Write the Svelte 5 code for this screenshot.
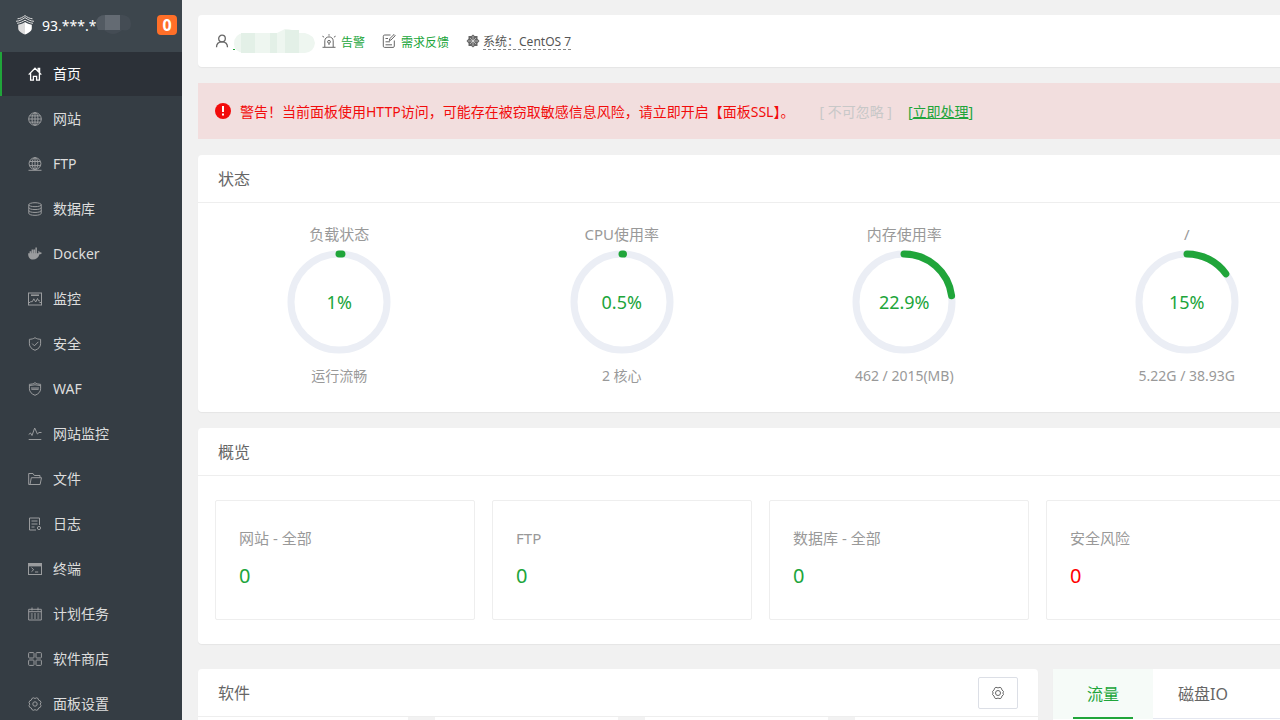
<script lang="ts">
  const menu = [
    { name: '首页', icon: 'home' },
    { name: '网站', icon: 'site' },
    { name: 'FTP', icon: 'ftp' },
    { name: '数据库', icon: 'database' },
    { name: 'Docker', icon: 'docker' },
    { name: '监控', icon: 'monitor' },
    { name: '安全', icon: 'shield' },
    { name: 'WAF', icon: 'waf' },
    { name: '网站监控', icon: 'pulse' },
    { name: '文件', icon: 'folder' },
    { name: '日志', icon: 'log' },
    { name: '终端', icon: 'terminal' },
    { name: '计划任务', icon: 'calendar' },
    { name: '软件商店', icon: 'apps' },
    { name: '面板设置', icon: 'gear' }
  ];

  const gauges = [
    { title: '负载状态', value: 1, info: '运行流畅' },
    { title: 'CPU使用率', value: 0.5, info: '2 核心' },
    { title: '内存使用率', value: 22.9, info: '462 / 2015(MB)' },
    { title: '/', value: 15, info: '5.22G / 38.93G' }
  ];

  const totals = [
    { title: '网站 - 全部', count: 0 },
    { title: 'FTP', count: 0 },
    { title: '数据库 - 全部', count: 0 },
    { title: '安全风险', count: 0, danger: true }
  ];

  let active = $state('home');
  let tab = $state('流量');
</script>

{#snippet icon(name: string)}
  <svg class="icon" viewBox="0 0 14 14" aria-hidden="true">
    {#if name === 'home'}
      <path d="M.7 7.6 7 1.2l6.3 6.4M2.6 6.3v6.9h2.8V9.4h3.2v3.8h2.8V6.3M10.2 4V1.4h1.4v4" stroke-width="1.3" />
    {:else if name === 'site'}
      <circle cx="7" cy="7" r="6.3" />
      <ellipse cx="7" cy="7" rx="3" ry="6.3" />
      <path d="M7 .7v12.6M.7 7h12.6M1.6 3.9h10.8M1.6 10.1h10.8" />
    {:else if name === 'ftp'}
      <circle cx="7" cy="6.6" r="5.9" />
      <ellipse cx="7" cy="6.6" rx="2.8" ry="5.9" />
      <path d="M7 .7v11.8M1.7 4.5h10.6M1.3 8.6h11.4M.5 13.3h13" />
    {:else if name === 'database'}
      <ellipse cx="7" cy="2.7" rx="6.2" ry="2" />
      <path d="M.8 2.7v8.6c0 2.7 12.4 2.7 12.4 0V2.7M.8 5.6c0 2.6 12.4 2.6 12.4 0M.8 8.5c0 2.6 12.4 2.6 12.4 0" />
    {:else if name === 'docker'}
      <path class="solid" d="M.2 6.2h10c.4-.8.3-1.7 0-2.4.8.1 1.4.9 1.5 1.6.8-.2 1.6 0 2.2.5-.4.9-1.3 1.4-2.4 1.4C10.3 11 8 12.6 5 12.6 1.7 12.6-.1 9.700.2 6.2ZM1.600 4.200h1.700v2.200H1.600ZM3.600 2.400h1.600v4H3.600ZM5.500 2.400h1.600v4H5.500ZM7.400.6h1.500v5.800H7.400Z" />
    {:else if name === 'monitor'}
      <rect x=".5" y="1" width="13" height="12" />
      <path d="M3 3.200h8" stroke-width="1.500" />
      <path d="M2.300 9.700h2l1.500-2.900L7.700 10l1.800-3.500 1 2.300h1.500M.7 10.500h1.500M11.500 10.500h1.800" />
    {:else if name === 'shield'}
      <path d="M7 .7c1.500 1.100 3.500 1.500 5.600 1.600v4.500c0 3-2.200 5.200-5.600 6.500-3.400-1.300-5.600-3.500-5.600-6.500V2.300C3.500 2.200 5.500 1.800 7 .7ZM4.200 6.600l2.200 2.200 4-4" />
    {:else if name === 'waf'}
      <path d="M7 .7c1.500 1.100 3.500 1.500 5.600 1.600v4.500c0 3-2.200 5.200-5.600 6.500-3.400-1.300-5.600-3.500-5.600-6.500V2.300C3.500 2.200 5.500 1.800 7 .7ZM1.400 3.500 7 2.800l5.600.7" />
      <path d="M3 6h8M3.400 7.300h7.200" />
    {:else if name === 'pulse'}
      <path d="M.7 7.500 2.500 6 4 8.500 6.700 1l2.700 6L11 5.500h2.500M.7 12.500h12.600" />
    {:else if name === 'folder'}
      <path d="M2 12.500H.7V1.500H5l1.300 2H12v2.200M2 12.500 3.300 5.700h10.200l-1.400 6.800Z" />
    {:else if name === 'log'}
      <path d="M8 13H1.500V1h10v7M3.500 4h6M3.500 7h6M3.500 10h3" />
      <circle cx="11" cy="11" r="1.600" />
    {:else if name === 'terminal'}
      <rect x=".5" y="1.500" width="13" height="11" />
      <path d="M.7 3.200h12.600" stroke-width="2.400" />
      <path d="m3.500 5.700 2.200 2-2.200 2M7 10h3.200" />
    {:else if name === 'calendar'}
      <path d="M.7 2.300h12.600V13H.7ZM.7 4.700h12.600M4 .5v3M10 .5v3M2.800 7h2M6 7h2M9.300 7h2M2.800 9h2M6 9h2M9.300 9h2M2.800 11h2M6 11h2M9.300 11h2" />
    {:else if name === 'apps'}
      <rect x=".6" y=".6" width="5.400" height="5.400" rx=".8" />
      <rect x="8" y=".6" width="5.400" height="5.400" rx=".8" />
      <rect x=".6" y="8" width="5.400" height="5.400" rx=".8" />
      <rect x="8" y="8" width="5.400" height="5.400" rx=".8" />
    {:else if name === 'gear'}
      <path d="m5.500.8 1.500.7 1.500-.7 1.600.7.5 1.600 1.700.8.7 1.700-.8 1.500.8 1.500-.7 1.700-1.700.7-.6 1.600-1.600.7-1.400-.7-1.500.7-1.600-.7-.6-1.600L1.700 10.300 1 8.600l.8-1.500L1 5.600l.7-1.700 1.600-.8.6-1.600Z" />
      <circle cx="7" cy="7" r="2.200" />
    {:else if name === 'gear-hex'}
      <path d="m5 1.300 2 .6 2-.6 1.500 1 .4 1.600 1.600 1.500-.6 1.600.6 1.600-1.600 1.500-.4 1.600-1.500 1-2-.6-2 .6-1.500-1-.4-1.600L1.500 8.600 2.100 7l-.6-1.600 1.600-1.500.4-1.600Z" />
      <circle cx="7" cy="7" r="2.500" />
    {:else if name === 'user'}
      <circle cx="7" cy="4.500" r="3.300" stroke-width="1.300" />
      <path d="M1.500 13.300c0-3.200 2.200-5.400 5.500-5.400s5.500 2.200 5.500 5.400" stroke-width="1.300" />
    {:else if name === 'alarm'}
      <path d="M2.800 13V6.800c0-5.200 8.400-5.200 8.400 0V13M.5 13.300h13M7 .2v1.500M.4 2.200l1.700 1M13.600 2.200l-1.700 1M7 9.200V11" />
      <circle cx="7" cy="7.800" r="1.400" />
    {:else if name === 'feedback'}
      <path d="M8.500 1H2.700C1.800 1 1.300 1.500 1.300 2.300v9.900c0 .8.500 1.200 1.300 1.200h8.500c.8 0 1.200-.5 1.200-1.200V6.500M3.500 4.500H6M3.500 7.800H8M3.500 10.800h6.500M7.300 6.500l.4-1.800L12 .5l1.200 1.200L9 6Z" />
    {:else if name === 'system'}
      <path class="solid" d="M7 .5 8.700 2h2.800v2.700L13.500 7l-2 2.300V12H8.700L7 13.500 5.300 12H2.500V9.300L.5 7l2-2.300V2h2.800Z" />
      <path class="cut" d="M7 2v10M2 7h10M4 4l6 6M10 4l-6 6" />
    {/if}
  </svg>
{/snippet}

<div class="panel">
  <aside>
    <div class="server">
      <svg class="logo" viewBox="0 0 18 20" aria-hidden="true">
        <path d="M0 6.300c4-.3 6-1.800 9-3.700 3 1.900 5 3.400 9 3.700M1.500 3.800C4.500 3.600 7 2 9 .6c2 1.400 4.500 3 7.500 3.200M1 8.300c3-.3 6-1.700 8-3.100 2 1.400 5 2.800 8 3.100" fill="none" stroke="#ddd" />
        <path d="M2.200 9.700c2.600-.6 4.800-1.500 6.800-2.800v12.600c-4-1.600-6.800-3.500-6.800-6.300Z" fill="#dcdcdc" />
        <path d="M15.800 9.700C13.200 9.100 11 8.200 9 6.900v12.600c4-1.600 6.800-3.500 6.800-6.300Z" fill="#fff" />
      </svg>
      <span class="address">93.***.**</span>
      <svg class="ip-mask" viewBox="0 0 36 22" aria-hidden="true">
        <path d="M0 9Q1 1 9 1h18q8 1 8 9t-9 6q-9 8-18 0Q1 17 0 9" fill="#444c54" />
        <path d="M0 9Q1 1 9 1v15H2Z" fill="#525a62" />
        <path d="M9 1h15v15H9z" fill="#646b73" />
      </svg>
      <span class="count">0</span>
    </div>
    <nav>
      {#each menu as item}
        <a href="#{item.icon}" class:active={active === item.icon} onclick={() => (active = item.icon)}>
          {@render icon(item.icon)}
          <span>{item.name}</span>
        </a>
      {/each}
    </nav>
  </aside>

  <main>
    <div class="content">
      <section class="card topbar">
        {@render icon('user')}
        <a class="account" href="#account" aria-label="account">
          <svg viewBox="0 0 84 26" aria-hidden="true">
            <path d="M2 15Q2 5 12 4h33l8-4q8 0 12 4h8q9 2 10 10-1 9-10 10H12Q2 23 2 15" fill="#eef6f0" />
            <path d="M9 4h14v20H9zM38 4h7v20h-7zM53 1h14v23H53z" fill="#e3f0e7" />
            <path d="M1 20h2v1H1z" fill="#20a53a" />
          </svg>
        </a>
        {@render icon('alarm')}
        <a class="green" href="#alarm">告警</a>
        {@render icon('feedback')}
        <a class="green" href="#feedback">需求反馈</a>
        {@render icon('system')}
        <a class="system" href="#system">系统：CentOS 7</a>
      </section>

      <section class="alert">
        <svg class="warn" viewBox="0 0 16 16" aria-hidden="true">
          <circle cx="8" cy="8" r="8" fill="#f20c0c" />
          <path d="M7 3h2v6H7zM7 10.500h2v2H7z" fill="#fff" />
        </svg>
        <span class="message">警告！当前面板使用HTTP访问，可能存在被窃取敏感信息风险，请立即开启【面板SSL】。</span>
        <span class="muted">[ 不可忽略 ]</span>
        <a href="#ssl">[<u>立即处理</u>]</a>
      </section>

      <section class="card status">
        <h2>状态</h2>
        <div class="gauges">
          {#each gauges as g}
            <div class="gauge">
              <h3>{g.title}</h3>
              <div class="ring">
                <svg viewBox="0 0 104 104" aria-hidden="true">
                  <circle cx="52" cy="52" r="48" stroke="#ebeef5" />
                  <circle
                    cx="52" cy="52" r="48" stroke="#20a53a" stroke-linecap="round"
                    pathLength="100" stroke-dasharray="{g.value} 100" transform="rotate(-90 52 52)"
                  />
                </svg>
                <span>{g.value}%</span>
              </div>
              <p>{g.info}</p>
            </div>
          {/each}
        </div>
      </section>

      <section class="card overview">
        <h2>概览</h2>
        <div class="totals">
          {#each totals as t}
            <div class="total">
              <h3>{t.title}</h3>
              <a href="#total" class:danger={t.danger}>{t.count}</a>
            </div>
          {/each}
        </div>
      </section>

      <div class="bottom">
        <section class="card software">
          <header>
            <h2>软件</h2>
            <button type="button" aria-label="设置">{@render icon('gear-hex')}</button>
          </header>
          <div class="tiles">
            <div></div>
            <div></div>
            <div></div>
            <div></div>
          </div>
        </section>
        <section class="card charts">
          <div class="tabs">
            {#each ['流量', '磁盘IO'] as name}
              <button type="button" class:on={tab === name} onclick={() => (tab = name)}><span>{name}</span></button>
            {/each}
          </div>
        </section>
      </div>
    </div>
  </main>
</div>

<style>
  :global(body) {
    background: #f1f1f1;
    font-family: "Noto Sans", "Noto Sans CJK SC", sans-serif;
    font-size: 14px;
    color: #666;
  }
  h2, h3, p {
    margin: 0;
    font-weight: 400;
  }
  a {
    color: #20a53a;
    text-decoration: none;
  }
  button {
    padding: 0;
    font: inherit;
    color: inherit;
    background: none;
    border: 0;
    cursor: pointer;
  }
  .panel {
    display: flex;
    height: 100vh;
    overflow: hidden;
  }
  .icon {
    flex: none;
    width: 14px;
    height: 14px;
    fill: none;
    stroke: currentColor;
    stroke-width: 1;
  }
  .icon .solid {
    fill: currentColor;
    stroke: none;
  }
  .icon .cut {
    stroke: #fff;
    stroke-width: 0.5;
  }

  /* sidebar */
  aside {
    flex: none;
    width: 182px;
    background: #353d44;
    overflow-y: auto;
    scrollbar-width: none;
  }
  .server {
    position: relative;
    display: flex;
    align-items: center;
    box-sizing: border-box;
    height: 52px;
    padding: 0 5px 2px 16px;
    background: #3d464d;
    color: #fff;
  }
  .logo {
    width: 18px;
    height: 20px;
  }
  .address {
    margin-left: 8px;
  }
  .ip-mask {
    position: absolute;
    left: 96px;
    top: 14px;
    width: 36px;
    height: 22px;
  }
  .count {
    width: 20px;
    margin-left: auto;
    border-radius: 4px;
    background: #ff6f28;
    font-size: 16px;
    font-weight: 700;
    line-height: 20px;
    text-align: center;
  }
  nav {
    display: flex;
    flex-direction: column;
    gap: 1px;
  }
  nav a {
    display: flex;
    align-items: center;
    gap: 11px;
    height: 44px;
    padding-left: 26px;
    border-left: 2px solid transparent;
    color: #9a9c9e;
  }
  nav span {
    padding-bottom: 2px;
    color: #ddd;
  }
  nav a.active {
    border-color: #20a53a;
    background: #2c3138;
    color: #fff;
  }
  nav a.active span {
    color: #fff;
  }

  /* content */
  main {
    flex: 1;
    min-width: 0;
    overflow: auto;
    scrollbar-width: none;
  }
  .content {
    display: flex;
    flex-direction: column;
    gap: 16px;
    min-width: 1695px;
    padding: 15px 16px;
    width: max-content;
  }
  .card {
    border-radius: 4px;
    background: #fff;
    box-shadow: 0 1px 1px rgba(0, 0, 0, 0.05);
  }
  .card h2 {
    padding: 2px 0 0 20px;
    border-bottom: 1px solid #eee;
    font-size: 16px;
    line-height: 45px;
  }
  .topbar {
    display: flex;
    align-items: center;
    height: 52px;
    padding-left: 17px;
    font-size: 12px;
  }
  .account {
    width: 84px;
    height: 26px;
    margin: 2px 6px 0 3px;
  }
  .green {
    margin: 0 17px 0 5px;
    padding-top: 2px;
  }
  .system {
    margin-left: 3px;
    padding-top: 2px;
    border-bottom: 1px dashed #888;
    color: #555;
    line-height: 15px;
  }
  .alert {
    display: flex;
    align-items: center;
    height: 56px;
    padding-left: 17px;
    background: #f2dede;
  }
  .warn {
    width: 16px;
    height: 16px;
  }
  .message {
    margin-left: 9px;
    color: #f20c0c;
  }
  .muted {
    margin: 0 16px 0 25px;
    color: #c8c8c8;
  }

  /* status */
  .gauges {
    display: grid;
    grid-template-columns: repeat(6, 1fr);
    padding: 19px 0 24px;
    color: #999;
    text-align: center;
  }
  .gauge h3 {
    font-size: 15px;
    line-height: 24px;
  }
  .ring {
    display: grid;
    place-items: center;
    margin: 4px 0 10px;
  }
  .ring > * {
    grid-area: 1 / 1;
  }
  .ring svg {
    width: 104px;
    height: 104px;
    fill: none;
    stroke-width: 7;
  }
  .ring span {
    color: #20a53a;
    font-size: 18px;
  }
  .gauge p {
    line-height: 24px;
  }

  /* overview */
  .totals {
    display: grid;
    grid-template-columns: repeat(6, 1fr);
    gap: 17px;
    padding: 24px 33px 24px 17px;
  }
  .total {
    box-sizing: border-box;
    height: 120px;
    padding: 25px 23px;
    border: 1px solid #eee;
    border-radius: 2px;
  }
  .total h3 {
    color: #999;
    font-size: 15px;
    line-height: 24px;
  }
  .total a {
    display: block;
    margin-top: 11px;
    font-size: 20px;
    line-height: 30px;
  }
  .total a.danger {
    color: #f00;
  }

  /* software and charts */
  .bottom {
    display: grid;
    grid-template-columns: 1fr 1fr;
    gap: 15px;
    margin-top: 9px;
  }
  .software header {
    display: flex;
    align-items: center;
    justify-content: space-between;
    padding-right: 20px;
    border-bottom: 1px solid #eee;
  }
  .software h2 {
    border: 0;
  }
  .software button {
    display: flex;
    align-items: center;
    justify-content: center;
    width: 40px;
    height: 32px;
    border: 1px solid #dcdfe6;
    border-radius: 2px;
  }
  .tiles {
    display: grid;
    grid-template-columns: repeat(4, 1fr);
  }
  .tiles div {
    height: 120px;
  }
  .tiles div + div {
    border-left: 27px solid #f2f2f2;
  }
  .tabs {
    display: flex;
    border-bottom: 1px solid #e4e7f0;
  }
  .tabs button {
    height: 50px;
    margin-bottom: -1px;
    padding: 0 20px;
    font-size: 16px;
  }
  .tabs span {
    display: block;
    box-sizing: border-box;
    min-width: 60px;
    height: 50px;
    border-bottom: 2px solid transparent;
    line-height: 50px;
  }
  .tabs .on {
    background: #f6fbf8;
    color: #20a53a;
  }
  .tabs .on span {
    border-color: #20a53a;
  }
</style>
